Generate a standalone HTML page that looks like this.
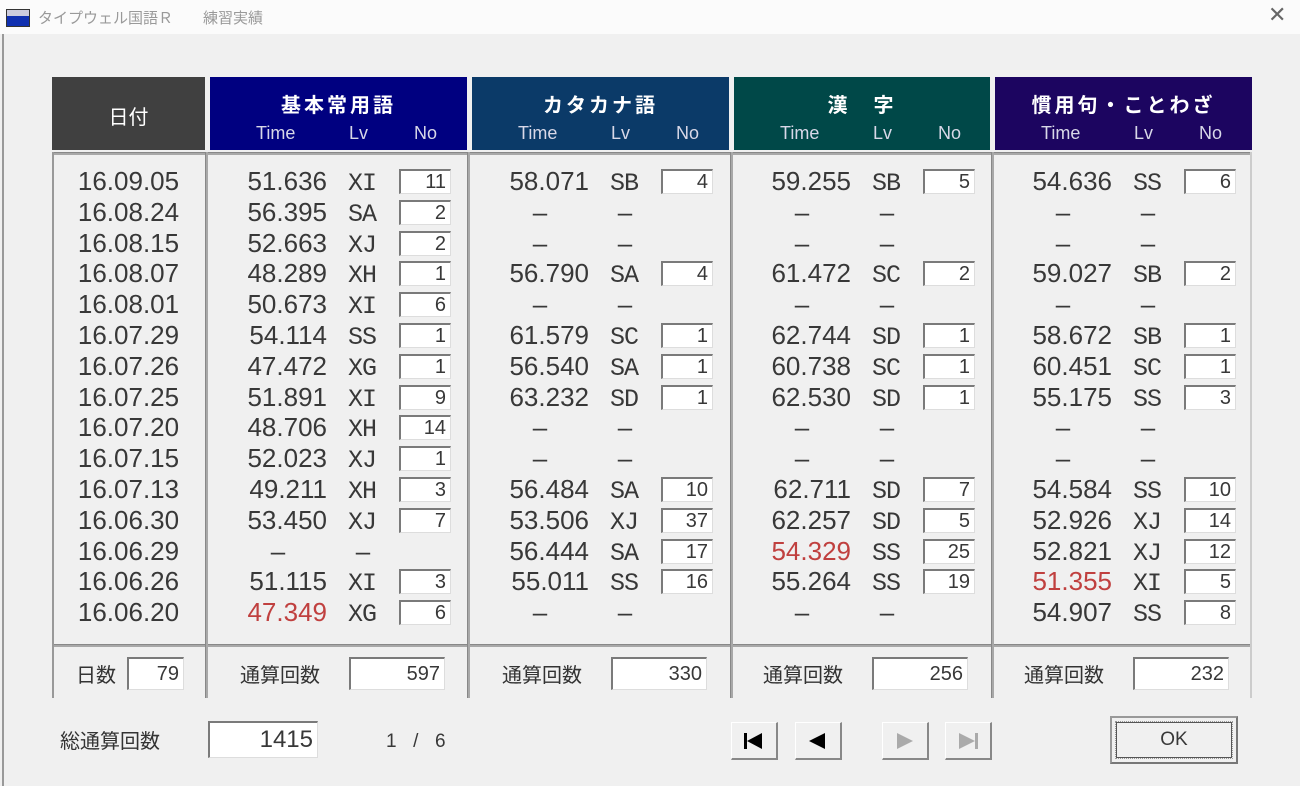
<!DOCTYPE html>
<html><head><meta charset="utf-8">
<style>
*{margin:0;padding:0;box-sizing:border-box}
body{width:1300px;height:786px;background:#f0f0f0;position:relative;overflow:hidden;font-family:"Liberation Sans","Noto Sans CJK JP",sans-serif;color:#383838}
.a{position:absolute}
.tb{left:0;top:0;width:1300px;height:34px;background:#fbfbfb}
.hd{top:77px;height:73px;color:#fff;text-align:center}
.hd .tt{font-size:20px;font-weight:bold;letter-spacing:3px;margin-top:12px;font-family:"Noto Sans CJK JP",sans-serif}
.hd .st{position:absolute;top:46px;font-size:18px;color:#d8d8e8}
.box{border-top:2px solid #7a7a7a;border-left:2px solid #7a7a7a;border-right:1px solid #ddd;border-bottom:1px solid #ddd;background:#fff;text-align:right;font-size:20px;padding-right:4px}
.col{top:166px}
.row{height:30.8px;line-height:30.8px;position:relative;font-size:26px}
.row .t{position:absolute;left:0;width:117px;text-align:right}
.row .l{position:absolute;left:138px;top:3px;font-family:"Liberation Mono",monospace;font-size:25px;letter-spacing:-1px}
.row .b{position:absolute;left:189px;top:3px;width:52px;height:25px;line-height:22px}
.row .d1{position:absolute;left:58px;width:20px;text-align:center}
.row .d2{position:absolute;left:143px;width:20px;text-align:center}
.red{color:#c0403f}
.vl{width:3px;background:#a8a8a8;border-left:1px solid #888}
.hl{height:3px;background:#a8a8a8;border-top:1px solid #888}
.lab{font-size:20px;font-family:"Noto Sans CJK JP",sans-serif;color:#333}
.btn{width:47px;height:38px;background:#f0f0f0;border-right:2px solid #888;border-bottom:2px solid #888;border-top:1px solid #fff;border-left:1px solid #fff}
</style></head><body>
<div class="a tb"></div>
<div class="a" style="left:2px;top:34px;width:2px;height:752px;background:#999"></div>
<div class="a" style="left:6px;top:9px;width:24px;height:18px;background:#1030b0;border:1px solid #333"><div style="height:6px;background:#ccd"></div></div>
<div class="a" style="left:38px;top:7px;font-size:15px;color:#999;font-family:'Noto Sans CJK JP',sans-serif">タイプウェル国語Ｒ　　練習実績</div>
<div class="a" style="left:1268px;top:2px;font-size:22px;color:#666">✕</div>

<div class="a hd" style="left:52px;width:153px;background:#404040"><div style="font-size:20px;margin-top:24px;font-family:'Noto Sans CJK JP',sans-serif">日付</div></div>
<div class="a hd" style="left:210px;width:257px;background:#000080"><div class="tt">基本常用語</div><span class="st" style="left:46px">Time</span><span class="st" style="left:139px">Lv</span><span class="st" style="left:204px">No</span></div>
<div class="a hd" style="left:472px;width:257px;background:#0b3a68"><div class="tt">カタカナ語</div><span class="st" style="left:46px">Time</span><span class="st" style="left:139px">Lv</span><span class="st" style="left:204px">No</span></div>
<div class="a hd" style="left:734px;width:256px;background:#004848"><div class="tt">漢　字</div><span class="st" style="left:46px">Time</span><span class="st" style="left:139px">Lv</span><span class="st" style="left:204px">No</span></div>
<div class="a hd" style="left:995px;width:257px;background:#1c0560"><div class="tt">慣用句・ことわざ</div><span class="st" style="left:46px">Time</span><span class="st" style="left:139px">Lv</span><span class="st" style="left:204px">No</span></div>

<div class="a hl" style="left:52px;top:152px;width:1200px"></div>
<div class="a hl" style="left:52px;top:644px;width:1200px"></div>
<div class="a vl" style="left:205px;top:152px;height:546px"></div>
<div class="a vl" style="left:467px;top:152px;height:546px"></div>
<div class="a vl" style="left:730px;top:152px;height:546px"></div>
<div class="a vl" style="left:991px;top:152px;height:546px"></div>
<div class="a" style="left:52px;top:152px;width:2px;height:546px;background:#999"></div>
<div class="a" style="left:1250px;top:152px;width:2px;height:546px;background:#ccc"></div>

<div class="a col" style="left:52px;width:153px;text-align:center">
<div class="row">16.09.05</div><div class="row">16.08.24</div><div class="row">16.08.15</div><div class="row">16.08.07</div><div class="row">16.08.01</div><div class="row">16.07.29</div><div class="row">16.07.26</div><div class="row">16.07.25</div><div class="row">16.07.20</div><div class="row">16.07.15</div><div class="row">16.07.13</div><div class="row">16.06.30</div><div class="row">16.06.29</div><div class="row">16.06.26</div><div class="row">16.06.20</div>
</div>

<div class="a col" style="left:210px">
<div class="row"><span class="t">51.636</span><span class="l">XI</span><span class="b box">11</span></div>
<div class="row"><span class="t">56.395</span><span class="l">SA</span><span class="b box">2</span></div>
<div class="row"><span class="t">52.663</span><span class="l">XJ</span><span class="b box">2</span></div>
<div class="row"><span class="t">48.289</span><span class="l">XH</span><span class="b box">1</span></div>
<div class="row"><span class="t">50.673</span><span class="l">XI</span><span class="b box">6</span></div>
<div class="row"><span class="t">54.114</span><span class="l">SS</span><span class="b box">1</span></div>
<div class="row"><span class="t">47.472</span><span class="l">XG</span><span class="b box">1</span></div>
<div class="row"><span class="t">51.891</span><span class="l">XI</span><span class="b box">9</span></div>
<div class="row"><span class="t">48.706</span><span class="l">XH</span><span class="b box">14</span></div>
<div class="row"><span class="t">52.023</span><span class="l">XJ</span><span class="b box">1</span></div>
<div class="row"><span class="t">49.211</span><span class="l">XH</span><span class="b box">3</span></div>
<div class="row"><span class="t">53.450</span><span class="l">XJ</span><span class="b box">7</span></div>
<div class="row"><span class="d1">–</span><span class="d2">–</span></div>
<div class="row"><span class="t">51.115</span><span class="l">XI</span><span class="b box">3</span></div>
<div class="row"><span class="t red">47.349</span><span class="l">XG</span><span class="b box">6</span></div>
</div>

<div class="a col" style="left:472px">
<div class="row"><span class="t">58.071</span><span class="l">SB</span><span class="b box">4</span></div>
<div class="row"><span class="d1">–</span><span class="d2">–</span></div>
<div class="row"><span class="d1">–</span><span class="d2">–</span></div>
<div class="row"><span class="t">56.790</span><span class="l">SA</span><span class="b box">4</span></div>
<div class="row"><span class="d1">–</span><span class="d2">–</span></div>
<div class="row"><span class="t">61.579</span><span class="l">SC</span><span class="b box">1</span></div>
<div class="row"><span class="t">56.540</span><span class="l">SA</span><span class="b box">1</span></div>
<div class="row"><span class="t">63.232</span><span class="l">SD</span><span class="b box">1</span></div>
<div class="row"><span class="d1">–</span><span class="d2">–</span></div>
<div class="row"><span class="d1">–</span><span class="d2">–</span></div>
<div class="row"><span class="t">56.484</span><span class="l">SA</span><span class="b box">10</span></div>
<div class="row"><span class="t">53.506</span><span class="l">XJ</span><span class="b box">37</span></div>
<div class="row"><span class="t">56.444</span><span class="l">SA</span><span class="b box">17</span></div>
<div class="row"><span class="t">55.011</span><span class="l">SS</span><span class="b box">16</span></div>
<div class="row"><span class="d1">–</span><span class="d2">–</span></div>
</div>

<div class="a col" style="left:734px">
<div class="row"><span class="t">59.255</span><span class="l">SB</span><span class="b box">5</span></div>
<div class="row"><span class="d1">–</span><span class="d2">–</span></div>
<div class="row"><span class="d1">–</span><span class="d2">–</span></div>
<div class="row"><span class="t">61.472</span><span class="l">SC</span><span class="b box">2</span></div>
<div class="row"><span class="d1">–</span><span class="d2">–</span></div>
<div class="row"><span class="t">62.744</span><span class="l">SD</span><span class="b box">1</span></div>
<div class="row"><span class="t">60.738</span><span class="l">SC</span><span class="b box">1</span></div>
<div class="row"><span class="t">62.530</span><span class="l">SD</span><span class="b box">1</span></div>
<div class="row"><span class="d1">–</span><span class="d2">–</span></div>
<div class="row"><span class="d1">–</span><span class="d2">–</span></div>
<div class="row"><span class="t">62.711</span><span class="l">SD</span><span class="b box">7</span></div>
<div class="row"><span class="t">62.257</span><span class="l">SD</span><span class="b box">5</span></div>
<div class="row"><span class="t red">54.329</span><span class="l">SS</span><span class="b box">25</span></div>
<div class="row"><span class="t">55.264</span><span class="l">SS</span><span class="b box">19</span></div>
<div class="row"><span class="d1">–</span><span class="d2">–</span></div>
</div>

<div class="a col" style="left:995px">
<div class="row"><span class="t">54.636</span><span class="l">SS</span><span class="b box">6</span></div>
<div class="row"><span class="d1">–</span><span class="d2">–</span></div>
<div class="row"><span class="d1">–</span><span class="d2">–</span></div>
<div class="row"><span class="t">59.027</span><span class="l">SB</span><span class="b box">2</span></div>
<div class="row"><span class="d1">–</span><span class="d2">–</span></div>
<div class="row"><span class="t">58.672</span><span class="l">SB</span><span class="b box">1</span></div>
<div class="row"><span class="t">60.451</span><span class="l">SC</span><span class="b box">1</span></div>
<div class="row"><span class="t">55.175</span><span class="l">SS</span><span class="b box">3</span></div>
<div class="row"><span class="d1">–</span><span class="d2">–</span></div>
<div class="row"><span class="d1">–</span><span class="d2">–</span></div>
<div class="row"><span class="t">54.584</span><span class="l">SS</span><span class="b box">10</span></div>
<div class="row"><span class="t">52.926</span><span class="l">XJ</span><span class="b box">14</span></div>
<div class="row"><span class="t">52.821</span><span class="l">XJ</span><span class="b box">12</span></div>
<div class="row"><span class="t red">51.355</span><span class="l">XI</span><span class="b box">5</span></div>
<div class="row"><span class="t">54.907</span><span class="l">SS</span><span class="b box">8</span></div>
</div>

<!-- footer -->
<div class="a lab" style="left:76px;top:659px">日数</div>
<div class="a box" style="left:127px;top:657px;width:57px;height:33px;line-height:30px">79</div>
<div class="a lab" style="left:240px;top:659px">通算回数</div>
<div class="a box" style="left:349px;top:657px;width:96px;height:33px;line-height:30px">597</div>
<div class="a lab" style="left:502px;top:659px">通算回数</div>
<div class="a box" style="left:611px;top:657px;width:96px;height:33px;line-height:30px">330</div>
<div class="a lab" style="left:763px;top:659px">通算回数</div>
<div class="a box" style="left:872px;top:657px;width:96px;height:33px;line-height:30px">256</div>
<div class="a lab" style="left:1024px;top:659px">通算回数</div>
<div class="a box" style="left:1133px;top:657px;width:96px;height:33px;line-height:30px">232</div>

<div class="a lab" style="left:60px;top:725px">総通算回数</div>
<div class="a box" style="left:208px;top:721px;width:110px;height:37px;line-height:33px;font-size:24px">1415</div>
<div class="a" style="left:386px;top:731px;font-size:19px;letter-spacing:2px">1 &nbsp;/ &nbsp;6</div>

<div class="a btn" style="left:731px;top:722px"><svg width="44" height="36"><rect x="12" y="10" width="3" height="16" fill="#000"/><polygon points="15,18 30,10 30,26" fill="#000"/></svg></div>
<div class="a btn" style="left:795px;top:722px"><svg width="44" height="36"><polygon points="13,18 29,10 29,26" fill="#000"/></svg></div>
<div class="a btn" style="left:882px;top:722px"><svg width="44" height="36"><polygon points="30,18 14,10 14,26" fill="#aaa"/></svg></div>
<div class="a btn" style="left:945px;top:722px"><svg width="44" height="36"><polygon points="29,18 13,10 13,26" fill="#aaa"/><rect x="29" y="10" width="3" height="16" fill="#aaa"/></svg></div>

<div class="a" style="left:1110px;top:716px;width:128px;height:48px;border:2px solid #777;border-top-color:#999;border-left-color:#999;background:#f0f0f0">
<div style="margin:4px;height:36px;border:1px solid #555;outline:1px dotted #999;text-align:center;line-height:34px;font-size:19px">OK</div></div>
</body></html>
